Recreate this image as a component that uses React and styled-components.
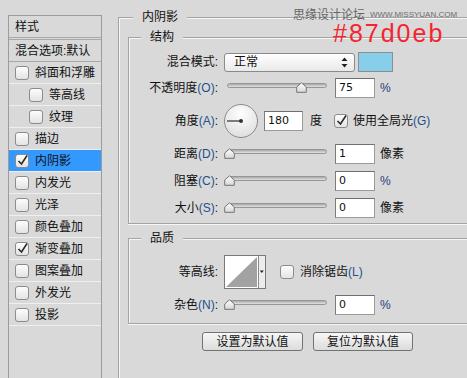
import React from 'react';
import styled, { createGlobalStyle } from 'styled-components';

const GlobalStyle = createGlobalStyle`
  html, body {
    margin: 0;
    padding: 0;
  }
  body {
    background: #d9d9d9;
    font-family: "Liberation Sans", "Noto Sans CJK SC", sans-serif;
    font-size: 12px;
    line-height: 14px;
    color: #111;
    overflow: hidden;
  }
  * {
    box-sizing: border-box;
  }
`;

const Page = styled.div`
  position: relative;
  display: flex;
  height: 378px;
  overflow: hidden;
`;

const Sidebar = styled.div`
  width: 94px;
  flex-shrink: 0;
  margin: 15px 0 0 8px;
  border: 1px solid #9c9c9c;
  border-bottom: none;
`;

const SideHeader = styled.div`
  height: 24px;
  padding-left: 6px;
  display: flex;
  align-items: center;
  border-bottom: 3px double #a8a8a8;
`;

const SideBlend = styled.div`
  height: 22px;
  padding-left: 6px;
  display: flex;
  align-items: center;
  border-bottom: 1px solid #a8a8a8;
`;

const SideItem = styled.div`
  height: 22px;
  padding-left: ${p => (p.$indent ? 20 : 6)}px;
  display: flex;
  align-items: center;
  gap: 6px;
  border-bottom: 1px solid #efefef;
  background: ${p => (p.$selected ? '#3399ff' : 'transparent')};
`;

const Box = styled.span`
  width: 14px;
  height: 14px;
  flex-shrink: 0;
  margin-left: ${p => p.$ml || 0}px;
  border: 1px solid #8c8c8c;
  border-radius: 3px;
  background: linear-gradient(#fdfdfd, #e3e3e3);
  position: relative;
  display: block;
`;

const CheckMark = styled.svg`
  position: absolute;
  left: 0;
  top: -2px;
`;

const Checkbox = ({ checked, ml }) => (
  <Box $ml={ml}>
    {checked && (
      <CheckMark width="13" height="14" viewBox="0 0 13 14">
        <path d="M2.5 8 L5.5 11 L11 2.5" fill="none" stroke="#2b2b2b" strokeWidth="1.6" />
      </CheckMark>
    )}
  </Box>
);

const Main = styled.div`
  flex: 1;
  margin: 17px 0 0 16px;
`;

const Group = styled.div`
  position: relative;
  width: ${p => p.$width}px;
  min-height: ${p => p.$minHeight || 0}px;
  margin-top: ${p => p.$mt || 0}px;
  padding: ${p => p.$pad};
  border: 1px solid #a3a3a3;
  border-right: none;
  border-bottom: ${p => (p.$open ? 'none' : '1px solid #a3a3a3')};
  box-shadow: ${p =>
    p.$open ? 'inset 1px 1px 0 #f6f6f6' : 'inset 1px 1px 0 #f6f6f6, 0 1px 0 #f6f6f6'};
`;

const GroupTitle = styled.span`
  position: absolute;
  top: -8px;
  left: ${p => p.$left}px;
  padding: 0 9px;
  background: #d9d9d9;
  font-size: 12px;
  line-height: 14px;
`;

const Row = styled.div`
  display: flex;
  align-items: center;
  height: ${p => p.$h || 20}px;
  margin-top: ${p => p.$mt || 0}px;
`;

const Label = styled.span`
  width: 89px;
  flex-shrink: 0;
  margin-right: 6px;
  text-align: right;
  white-space: nowrap;
`;

const Key = styled.span`
  color: #1f4f8c;
`;

const Select = styled.div`
  width: 131px;
  height: 19px;
  padding: 0 6px 0 9px;
  display: flex;
  align-items: center;
  justify-content: space-between;
  border: 1px solid #8a8a8a;
  border-radius: 3px;
  background: linear-gradient(#ffffff, #e9e9e9);
`;

const Swatch = styled.div`
  width: 35px;
  height: 20px;
  margin-left: 3px;
  border: 1px solid #8e8e8e;
  background: #87ceeb;
`;

const SliderBox = styled.div`
  position: relative;
  width: 103px;
  height: 14px;
  flex-shrink: 0;
`;

const Track = styled.div`
  position: absolute;
  left: 3px;
  right: 0;
  top: 2px;
  height: 5px;
  border: 1px solid #969696;
  border-radius: 3px;
  background: linear-gradient(#a9a9a9, #e2e2e2);
`;

const Thumb = styled.svg`
  position: absolute;
  top: 1px;
`;

const Slider = ({ value }) => (
  <SliderBox>
    <Track />
    <Thumb width="11" height="11" viewBox="0 0 11 11" style={{ left: value * 0.97 - 0.5 }}>
      <defs>
        <linearGradient id="thumbFill" x1="0" y1="0" x2="0" y2="1">
          <stop offset="0" stopColor="#ffffff" />
          <stop offset="1" stopColor="#d6d6d6" />
        </linearGradient>
      </defs>
      <path d="M5.5 0.8 L10.3 5 L10.3 10.3 L0.7 10.3 L0.7 5 Z" fill="url(#thumbFill)" stroke="#747474" strokeWidth="1" />
    </Thumb>
  </SliderBox>
);

const NumInput = styled.div`
  width: ${p => p.$w || 40}px;
  height: 20px;
  margin-left: ${p => (p.$ml === undefined ? 8 : p.$ml)}px;
  padding-left: 3px;
  display: flex;
  align-items: center;
  flex-shrink: 0;
  background: #fff;
  border: 1px solid #9a9a9a;
  border-top-color: #707070;
  border-left-color: #7c7c7c;
  font-family: "DejaVu Sans", "Liberation Sans", sans-serif;
  font-size: 11px;
  color: #111;
`;

const Unit = styled.span`
  margin-left: ${p => p.$ml || 5}px;
  white-space: nowrap;
  color: ${p => (p.$blue ? '#1f3f7a' : '#111')};
`;

const ButtonRow = styled.div`
  display: flex;
  gap: 10px;
  margin: 8px 0 0 74px;
`;

const Button = styled.div`
  width: ${p => p.$w}px;
  height: 19px;
  display: flex;
  align-items: center;
  justify-content: center;
  border: 1px solid #727272;
  border-radius: 3px;
  background: linear-gradient(#f7f7f7, #dcdcdc);
  font-size: 12px;
`;

const Watermark = styled.div`
  position: absolute;
  left: 293px;
  top: 8px;
  display: flex;
  align-items: center;
  gap: 5px;
  color: #666;
  white-space: nowrap;
`;

const WatermarkSite = styled.span`
  font-size: 8px;
  font-family: "Liberation Sans", sans-serif;
  color: #6c6c6c;
`;

const ColorNote = styled.div`
  position: absolute;
  left: 333px;
  top: 21px;
  font-family: "Liberation Sans", sans-serif;
  font-size: 25px;
  line-height: 25px;
  letter-spacing: 2px;
  color: #f5242e;
`;

const ArrowsIcon = () => (
  <svg width="7" height="11" viewBox="0 0 7 11">
    <path d="M3.5 0.5 L6.5 4 L0.5 4 Z" fill="#222" />
    <path d="M3.5 10.5 L6.5 7 L0.5 7 Z" fill="#222" />
  </svg>
);

const Dial = () => (
  <svg width="34" height="34" viewBox="0 0 34 34">
    <defs>
      <radialGradient id="dialFill" cx="0.5" cy="0.3" r="0.75">
        <stop offset="0" stopColor="#ffffff" />
        <stop offset="1" stopColor="#dcdcdc" />
      </radialGradient>
    </defs>
    <circle cx="17" cy="17" r="16.5" fill="url(#dialFill)" stroke="#8a8a8a" />
    <line x1="3" y1="17" x2="17" y2="17" stroke="#555" strokeWidth="1.5" />
    <circle cx="17" cy="17" r="2" fill="#333" />
  </svg>
);

const ContourPreview = () => (
  <svg width="42" height="34" viewBox="0 0 42 34">
    <rect x="0.5" y="0.5" width="41" height="33" fill="#fff" stroke="#7a7a7a" />
    <path d="M2 32 L33 2 L33 32 Z" fill="#a2a2a2" />
    <rect x="34" y="1" width="7" height="32" fill="#ececec" />
    <line x1="34.5" y1="1" x2="34.5" y2="33" stroke="#8a8a8a" />
    <path d="M35.8 15.5 L39.8 15.5 L37.8 18 Z" fill="#222" />
  </svg>
);

const items = [
  { label: '斜面和浮雕' },
  { label: '等高线', indent: true },
  { label: '纹理', indent: true },
  { label: '描边' },
  { label: '内阴影', checked: true, selected: true },
  { label: '内发光' },
  { label: '光泽' },
  { label: '颜色叠加' },
  { label: '渐变叠加', checked: true },
  { label: '图案叠加' },
  { label: '外发光' },
  { label: '投影' },
];

export default function App() {
  return (
    <>
      <GlobalStyle />
      <Page>
        <Sidebar>
          <SideHeader>样式</SideHeader>
          <SideBlend>混合选项:默认</SideBlend>
          {items.map(item => (
            <SideItem key={item.label} $indent={item.indent} $selected={item.selected}>
              <Checkbox checked={item.checked} />
              <span>{item.label}</span>
            </SideItem>
          ))}
        </Sidebar>

        <Main>
          <Group $width={520} $minHeight={400} $open $pad="19px 0 0 9px">
            <GroupTitle $left={14}>内阴影</GroupTitle>

            <Group $width={500} $pad="14px 0 5px 0">
              <GroupTitle $left={12}>结构</GroupTitle>
              <Row>
                <Label>混合模式:</Label>
                <Select>
                  <span>正常</span>
                  <ArrowsIcon />
                </Select>
                <Swatch />
              </Row>
              <Row $mt={6}>
                <Label>
                  不透明度<Key>(O)</Key>:
                </Label>
                <Slider value={75} />
                <NumInput>75</NumInput>
                <Unit $blue>%</Unit>
              </Row>
              <Row $mt={6} $h={34}>
                <Label>
                  角度<Key>(A)</Key>:
                </Label>
                <Dial />
                <NumInput $w={39} $ml={6}>180</NumInput>
                <Unit $ml={7}>度</Unit>
                <Checkbox checked ml={12} />
                <Unit>
                  使用全局光<Key>(G)</Key>
                </Unit>
              </Row>
              <Row $mt={6}>
                <Label>
                  距离<Key>(D)</Key>:
                </Label>
                <Slider value={0} />
                <NumInput>1</NumInput>
                <Unit>像素</Unit>
              </Row>
              <Row $mt={7}>
                <Label>
                  阻塞<Key>(C)</Key>:
                </Label>
                <Slider value={0} />
                <NumInput>0</NumInput>
                <Unit $blue>%</Unit>
              </Row>
              <Row $mt={7}>
                <Label>
                  大小<Key>(S)</Key>:
                </Label>
                <Slider value={0} />
                <NumInput>0</NumInput>
                <Unit>像素</Unit>
              </Row>
            </Group>

            <Group $width={500} $mt={14} $pad="16px 0 8px 0">
              <GroupTitle $left={12}>品质</GroupTitle>
              <Row $h={34}>
                <Label>等高线:</Label>
                <ContourPreview />
                <Checkbox ml={14} />
                <Unit $ml={6}>
                  消除锯齿<Key>(L)</Key>
                </Unit>
              </Row>
              <Row $mt={6}>
                <Label>
                  杂色<Key>(N)</Key>:
                </Label>
                <Slider value={0} />
                <NumInput>0</NumInput>
                <Unit $blue>%</Unit>
              </Row>
            </Group>

            <ButtonRow>
              <Button $w={101}>设置为默认值</Button>
              <Button $w={100}>复位为默认值</Button>
            </ButtonRow>
          </Group>
        </Main>

        <Watermark>
          <span>思缘设计论坛</span>
          <WatermarkSite>WWW.MISSYUAN.COM</WatermarkSite>
        </Watermark>
        <ColorNote>#87d0eb</ColorNote>
      </Page>
    </>
  );
}
